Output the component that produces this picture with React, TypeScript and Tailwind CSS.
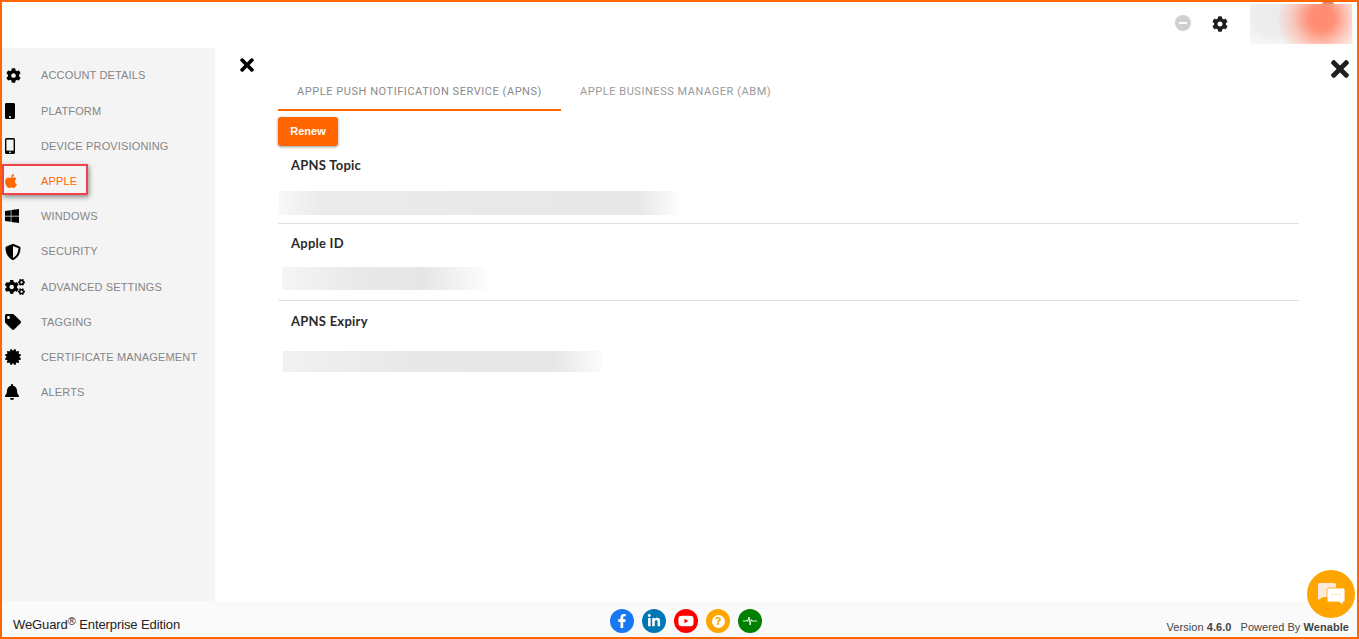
import React from "react";
import { FaCog, FaMobile, FaApple, FaWindows, FaShieldAlt, FaCogs, FaTag, FaCertificate, FaBell, FaTimes, FaFacebookF, FaLinkedinIn, FaYoutube, FaQuestion } from "react-icons/fa";

const OutlinePhone = () => (
  <svg width="10" height="16" viewBox="0 0 10 16">
    <rect x="0" y="0" width="10" height="16" rx="1.6" fill="#000" />
    <rect x="1.4" y="1.6" width="7.2" height="11" fill="#f4f4f4" />
    <circle cx="5" cy="14.3" r="0.9" fill="#f4f4f4" />
  </svg>
);

const items: { label: string; icon: React.ReactNode; active?: boolean }[] = [
  { label: "ACCOUNT DETAILS", icon: <FaCog size={15} className="ml-[1px]" /> },
  { label: "PLATFORM", icon: <FaMobile size={16} className="ml-[-3px]" /> },
  { label: "DEVICE PROVISIONING", icon: <OutlinePhone /> },
  { label: "APPLE", icon: <FaApple size={16} className="ml-[-2px] text-[#ff6600]" />, active: true },
  { label: "WINDOWS", icon: <FaWindows size={16} className="ml-[-1px]" /> },
  { label: "SECURITY", icon: <FaShieldAlt size={16} /> },
  { label: "ADVANCED SETTINGS", icon: <FaCogs size={20} /> },
  { label: "TAGGING", icon: <FaTag size={16} /> },
  { label: "CERTIFICATE MANAGEMENT", icon: <FaCertificate size={16} /> },
  { label: "ALERTS", icon: <FaBell size={16} className="ml-[-1px]" /> },
];

const Field = ({ title, blur, gap, last }: { title: string; blur: string; gap: string; last?: boolean }) => (
  <div className={last ? "" : "border-b border-[#e0e0e0]"}>
    <div className="pl-[13px] h-[20px] flex items-center font-['Lato',sans-serif] font-bold text-[13px] tracking-[0.25px] text-[#2b2b2b]">{title}</div>
    <div className={gap}>
      <div className={blur} />
    </div>
  </div>
);

export default function App() {
  return (
    <div className="w-[1359px] h-[639px] border-2 border-[#ff6600] bg-white flex flex-col overflow-hidden font-['Liberation_Sans',sans-serif]">
      <header className="h-[46px] shrink-0 flex items-start justify-end pr-[5px]">
        <div className="flex items-center h-[42px] gap-[21px] mr-[22px]">
          <div className="w-4 h-4 rounded-full bg-[#cfcfcf] flex items-center justify-center">
            <div className="w-[8px] h-[2px] bg-white" />
          </div>
          <FaCog size={16} className="text-[#1f1f1f] mt-[1px]" />
        </div>
        <div className="w-[102px] flex flex-col items-end">
          <div className="w-[12px] h-[2px] mr-[18px] rounded-t-full bg-[#e8845f]" />
          <div className="w-[102px] h-[40px] bg-[radial-gradient(ellipse_44px_46px_at_70%_35%,#ff8a70_0%,#ff8f76_28%,rgba(255,170,150,0.6)_62%,rgba(255,215,205,0)_100%),radial-gradient(ellipse_52px_34px_at_30%_35%,#ebebeb_0%,#ededed_50%,#fbfbfb_100%)]" />
        </div>
      </header>
      <div className="flex flex-1 min-h-0">
        <aside className="w-[213px] shrink-0 bg-[#f4f4f4] pt-[10.1px]">
          {items.map((it) => (
            <div key={it.label} className="relative h-[35.2px] flex items-center pl-[3px]">
              <div className="w-[36px] flex items-center text-black">{it.icon}</div>
              <span className={"text-[11px] font-medium tracking-[0.15px] " + (it.active ? "text-[#ff6600]" : "text-[#858585]")}>{it.label}</span>
              {it.active && (
                <div className="absolute left-0 top-0 w-[86px] h-[31px] border-2 border-[#f0444a] shadow-[1px_2px_5px_rgba(0,0,0,0.45)]" />
              )}
            </div>
          ))}
        </aside>
        <main className="flex-1 flex min-w-0">
          <div className="w-[63px] shrink-0 pt-[7px] pl-[22px]">
            <FaTimes size={20} className="text-black" />
          </div>
          <div className="w-[1021px] shrink-0 pt-[24px]">
            <div className="flex h-[39px]">
              <div className="w-[283px] h-[39px] border-b-2 border-[#ff6600] flex items-center justify-center font-['Roboto',sans-serif] text-[11px] tracking-[0.55px] text-[#8a8a8a] pt-[3px]">APPLE PUSH NOTIFICATION SERVICE (APNS)</div>
              <div className="px-[19px] h-[39px] flex items-center font-['Roboto',sans-serif] text-[11px] tracking-[0.55px] text-[#9a9a9a] pt-[1px]">APPLE BUSINESS MANAGER (ABM)</div>
            </div>
            <button className="mt-[6px] block w-[60px] h-[29px] rounded-[3px] bg-[#ff6600] text-white text-[11px] font-bold shadow-[0_1px_3px_rgba(0,0,0,0.4)]">Renew</button>
            <div className="mt-[10px]">
              <Field title="APNS Topic" gap="pt-[15px] pb-[8px]" blur="ml-[1px] w-[399px] h-[24px] bg-[linear-gradient(90deg,#f8f8f8_0%,#ebebeb_10%,#e9e9e9_50%,#e7e7e7_90%,#fcfcfc_100%)]" />
              <div className="mt-[10px]">
                <Field title="Apple ID" gap="pt-[13px] pb-[10px]" blur="ml-[4px] w-[204px] h-[23px] bg-[linear-gradient(90deg,#f5f5f5_0%,#e8e8e8_40%,#e6e6e6_70%,#fcfcfc_100%)]" />
              </div>
              <div className="mt-[11px]">
                <Field last title="APNS Expiry" gap="pt-[19px]" blur="ml-[5px] w-[319px] h-[21px] bg-[linear-gradient(90deg,#f1f1f1_0%,#e8e8e8_40%,#e7e7e7_85%,#fcfcfc_100%)]" />
              </div>
            </div>
          </div>
          <div className="flex-1 pt-[8px] pl-[28px]">
            <FaTimes size={26} className="text-[#1f1f1f]" />
          </div>
        </main>
      </div>
      <footer className="h-[36px] shrink-0 bg-[#fafafa] flex items-center relative">
        <div className="w-[608px] shrink-0 pl-[11px] pt-[12px] text-[13px] leading-[20px] text-[#222222] tracking-[-0.1px]">
          WeGuard<span className="text-[11px] relative top-[-4px]">®</span> Enterprise Edition
        </div>
        <div className="flex gap-[8px] pt-[4px]">
          <div className="w-6 h-6 rounded-full bg-[#1877f2] flex items-center justify-center"><FaFacebookF size={14} className="text-white" /></div>
          <div className="w-6 h-6 rounded-full bg-[#0077b5] flex items-center justify-center"><FaLinkedinIn size={14} className="text-white" /></div>
          <div className="w-6 h-6 rounded-full bg-[#ff0000] flex items-center justify-center"><FaYoutube size={16} className="text-white" /></div>
          <div className="w-6 h-6 rounded-full bg-[#ffa500] flex items-center justify-center">
            <div className="w-[13px] h-[13px] rounded-full bg-white flex items-center justify-center"><FaQuestion size={8} className="text-[#ffa500]" /></div>
          </div>
          <div className="w-6 h-6 rounded-full bg-[#008000] flex items-center justify-center">
            <svg width="14" height="10" viewBox="0 0 14 10" fill="none" stroke="#fff" strokeWidth="0.9">
              <path d="M0 5h3l1-1 .7 1.5L6 1l1.200 8 1-5.500 .8 1.500h5" />
            </svg>
          </div>
        </div>
        <div className="ml-auto pr-[8px] pt-[15px] text-[11px] leading-[14px] tracking-[0.06px] text-[#444444]">
          Version <span className="font-bold">4.6.0</span><span className="ml-[9px]">Powered By</span> <span className="font-bold">Wenable</span>
        </div>
        <div className="absolute right-[2px] top-[-31px] w-12 h-12 rounded-full bg-[#ffa500] flex items-center justify-center">
          <svg width="27" height="22" viewBox="0 0 27 22">
            <path d="M2 0h14a2 2 0 0 1 2 2v10a2 2 0 0 1-2 2H5l-5 3V2a2 2 0 0 1 2-2z" fill="#ffe9dc" />
            <path d="M11 5h14a2 2 0 0 1 2 2v10a2 2 0 0 1-2 2v3l-4-3H11a2 2 0 0 1-2-2V7a2 2 0 0 1 2-2z" fill="#fff" stroke="#ffa500" strokeWidth="0.8" />
            <circle cx="14.500" cy="11.500" r="0.6" fill="#ffa500" />
            <circle cx="18" cy="11.500" r="0.6" fill="#ffa500" />
            <circle cx="21.500" cy="11.500" r="0.6" fill="#ffa500" />
          </svg>
        </div>
      </footer>
    </div>
  );
}
